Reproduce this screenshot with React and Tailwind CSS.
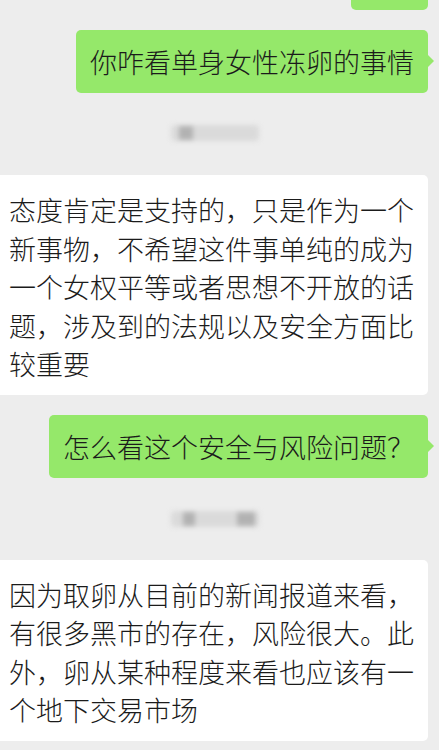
import React from 'react';

const FONT = { fontFamily: '"Noto Sans CJK SC", "Noto Sans", sans-serif' };

function SentBubble({ children }) {
    return (
        <div className="flex justify-end pr-[11px]">
            <div className="relative rounded-[5px] bg-[#95e86a] px-[14px] h-[63px] flex items-center text-[27px] leading-none font-light text-[#1b1b1b] whitespace-nowrap">
                {children}
                {/* bubble tail */}
                <div className="absolute right-[-6px] top-[25px] w-0 h-0 border-y-[6px] border-y-transparent border-l-[6px] border-l-[#95e86a]" />
            </div>
        </div>
    );
}

function ReceivedBubble({ lines }) {
    return (
        <div className="pr-[11px]">
            <div className="bg-white rounded-r-[5px] pl-[9px] pr-[12px] pt-[16px] pb-[11px] text-[27px] leading-[38.5px] font-light text-[#1b1b1b]">
                {lines.map((line, i) => (
                    <div key={i} className="whitespace-nowrap">{line}</div>
                ))}
            </div>
        </div>
    );
}

// Blurred-out timestamp between messages
function Stamp({ blocks }) {
    return (
        <div className="flex justify-center">
            <div className="relative ml-[-9px] w-[88px] h-[16px] bg-[#dadada] blur-[2.5px] rounded-sm">
                {blocks.map((b, i) => (
                    <div
                        key={i}
                        className="absolute top-[1px] h-[14px] bg-[#b2b2b2]"
                        style={{ left: b[0], width: b[1] }}
                    />
                ))}
            </div>
        </div>
    );
}

export default function App() {
    return (
        <div className="w-[439px] h-[750px] overflow-hidden bg-[#ededed]" style={FONT}>
            {/* tail end of previous message */}
            <div className="flex justify-end pr-[11px]">
                <div className="w-[77px] h-[10px] bg-[#95e86a] rounded-b-[5px]" />
            </div>

            <div className="mt-[20px]">
                <SentBubble>你咋看单身女性冻卵的事情</SentBubble>
            </div>

            <div className="mt-[32px]">
                <Stamp blocks={[[8, 14]]} />
            </div>

            <div className="mt-[34px]">
                <ReceivedBubble
                    lines={[
                        '态度肯定是支持的，只是作为一个',
                        '新事物，不希望这件事单纯的成为',
                        '一个女权平等或者思想不开放的话',
                        '题，涉及到的法规以及安全方面比',
                        '较重要',
                    ]}
                />
            </div>

            <div className="mt-[20px]">
                <SentBubble>怎么看这个安全与风险问题？</SentBubble>
            </div>

            <div className="mt-[33px]">
                <Stamp blocks={[[12, 12], [66, 18]]} />
            </div>

            <div className="mt-[33px]">
                <ReceivedBubble
                    lines={[
                        '因为取卵从目前的新闻报道来看，',
                        '有很多黑市的存在，风险很大。此',
                        '外，卵从某种程度来看也应该有一',
                        '个地下交易市场',
                    ]}
                />
            </div>
        </div>
    );
}
